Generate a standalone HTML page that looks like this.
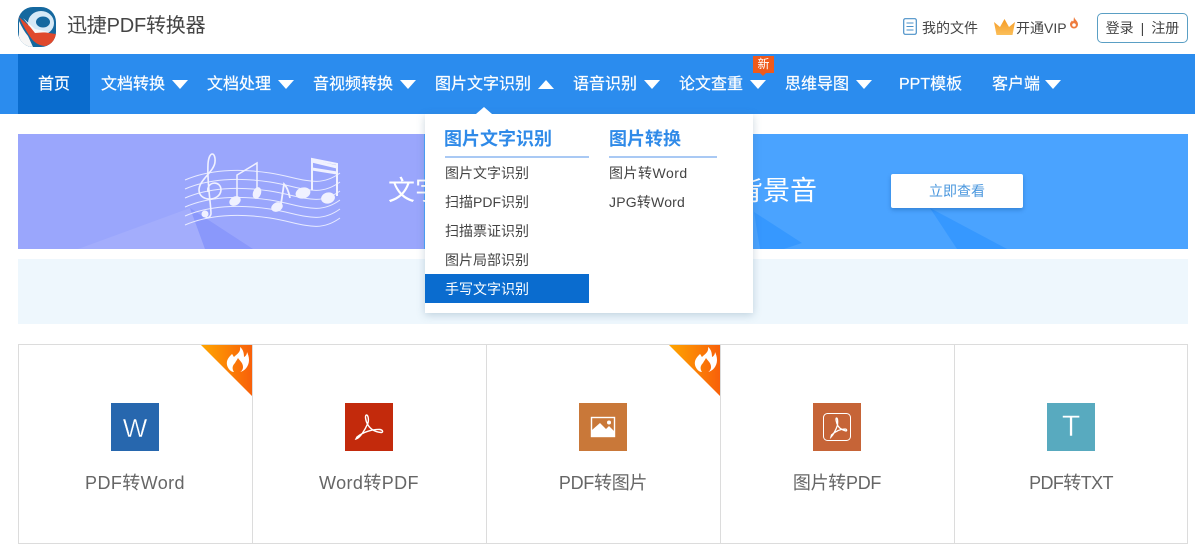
<!DOCTYPE html>
<html lang="zh"><head><meta charset="utf-8"><title>迅捷PDF转换器</title>
<style>
html,body{margin:0;padding:0;background:#fff}
body{width:1195px;height:545px;position:relative;overflow:hidden;font-family:"Liberation Sans","Noto Sans CJK SC",sans-serif;color:#444}
.a{position:absolute;white-space:nowrap}
.n{position:absolute;top:55px;height:60px;line-height:60px;color:#fff;font-size:16px;white-space:nowrap;-webkit-text-stroke:.2px #fff}
.t{position:absolute;top:80px;width:0;height:0;border-left:8px solid transparent;border-right:8px solid transparent;border-top:9px solid #fff}
.m{position:absolute;font-size:14px;color:#444;white-space:nowrap;line-height:20px}
.c{position:absolute;top:344px;height:198px;border:1px solid #dcdcdc;border-right:0;width:233px}
.i{position:absolute;top:403px;width:48px;height:48px}
.l{position:absolute;top:470px;width:234px;text-align:center;font-size:18px;line-height:26px;color:#666}
</style></head><body>
<svg class="a" style="left:18px;top:7px" width="38" height="40" viewBox="0 0 38 40">
<defs><clipPath id="lg"><rect x="0" y="0" width="38" height="40" rx="15"/></clipPath></defs>
<g clip-path="url(#lg)"><rect width="38" height="40" fill="#15689f"/>
<ellipse cx="23" cy="16" rx="13" ry="12" fill="#d6e9f6"/><ellipse cx="25" cy="15" rx="7" ry="5.500" fill="#15689f"/>
<path d="M11 27L6 40H22L26 32Z" fill="#15689f"/>
<path d="M1 10 L17 24 L38 27 L38 34 L28 39 Q19 39 13 31 Q6 21 1 10Z" fill="#e0492c"/>
<path d="M1 14 Q5 23 10 29 L15 40 L5 40 L1 30Z" fill="#f6f6f6"/>
<path d="M5 11 L17 22 L31 25 L17 26Z" fill="#f8f8f8"/></g></svg>
<div class="a" style="left:67px;top:12px;font-size:20px;line-height:28px;color:#444;letter-spacing:-.2px">迅捷PDF转换器</div>

<svg class="a" style="left:903px;top:18px" width="14" height="17" viewBox="0 0 14 17"><rect x=".7" y=".7" width="12.600" height="15.600" rx="1.500" fill="none" stroke="#4a90c8" stroke-width="1.200"/><path d="M3.500 5h7M3.500 8.500h7M3.500 12h7" stroke="#4a90c8" stroke-width="1.100"/></svg>
<div class="a" style="left:922px;top:19px;font-size:14px;line-height:18px;color:#444;letter-spacing:0">我的文件</div>
<svg class="a" style="left:994px;top:19px" width="22" height="17" viewBox="0 0 22 17"><defs><linearGradient id="cr" x1="0" y1="0" x2="0" y2="1"><stop offset="0" stop-color="#f59a23"/><stop offset="1" stop-color="#fbbf5a"/></linearGradient></defs><path d="M2.500 16 L0 3 L6 8 L10.500 0 L15 8 L21 3 L18.500 16Z" fill="url(#cr)"/></svg>
<div class="a" style="left:1016px;top:19px;font-size:14px;line-height:18px;color:#444">开通VIP</div>
<svg class="a" style="left:1069px;top:17px" width="10" height="12" viewBox="0 0 10 12"><path d="M5 0C6 3 9 4 9 7.500A4 4 0 0 1 1 7.500C1 5.500 2 5 3 3.500C3.500 4.500 4 4.500 4.500 4Z" fill="#ee7b3c"/><circle cx="5" cy="8" r="1.800" fill="#fff"/></svg>
<div class="a" style="left:1097px;top:13px;width:89px;height:28px;border:1px solid #5a9fc4;border-radius:5px;text-align:center;line-height:28px;font-size:14px;color:#444">登录<span style="margin:0 7px">|</span>注册</div>

<div class="a" style="left:0;top:54px;width:1195px;height:60px;background:#2b8cee"></div>
<div class="a" style="left:18px;top:54px;width:72px;height:60px;background:#0a6cce"></div>
<div class="n" style="left:38px">首页</div>
<div class="n" style="left:101px">文档转换</div><div class="t" style="left:172px"></div>
<div class="n" style="left:207px">文档处理</div><div class="t" style="left:278px"></div>
<div class="n" style="left:313px">音视频转换</div><div class="t" style="left:400px"></div>
<div class="n" style="left:435px">图片文字识别</div><div class="t" style="left:538px;border-top:0;border-bottom:9px solid #fff"></div>
<div class="n" style="left:573px">语音识别</div><div class="t" style="left:644px"></div>
<div class="n" style="left:679px">论文查重</div><div class="t" style="left:750px"></div>
<div class="n" style="left:785px">思维导图</div><div class="t" style="left:856px"></div>
<div class="n" style="left:899px">PPT模板</div>
<div class="n" style="left:992px">客户端</div><div class="t" style="left:1045px"></div>
<div class="a" style="left:753px;top:56px;width:21px;height:17px;background:#ef5a1c;color:#fff;font-size:12px;line-height:17px;text-align:center">新</div>
<div class="a" style="left:760px;top:73px;width:0;height:0;border-left:3px solid transparent;border-right:3px solid transparent;border-top:3px solid #ef5a1c"></div>

<div class="a" style="left:18px;top:134px;width:1170px;height:115px;background:#4aa3ff;overflow:hidden">
<div class="a" style="left:0;top:0;width:406px;height:115px;background:#9aa6fc"></div>
<svg class="a" style="left:0;top:0" width="1170" height="115" viewBox="0 0 1170 115">
<path d="M60 115L172 74L187 115Z" fill="#a3adfc"/>
<path d="M172 74L235 115H187Z" fill="#8a98fb"/>
<path d="M736 78L784 109L766 115H742Z" fill="#3698ff"/>
<path d="M912 74L989 115H939Z" fill="#3698ff"/>
<g fill="none" stroke="#e8ebff" stroke-width="1">
<path d="M167 46C190 36 220 34 252 39S300 55 322 39"/>
<path d="M167 55C190 45 220 43 252 48S300 64 322 48"/>
<path d="M167 64C190 54 220 52 252 57S300 73 322 57"/>
<path d="M167 73C190 63 220 61 252 66S300 82 322 66"/>
<path d="M167 82C190 72 220 70 252 75S300 91 322 75"/>
<path d="M167 91C190 81 220 79 252 84S300 100 322 84"/>
</g>
<g fill="#f0f1ff" stroke="#f0f1ff">
<path d="M188 80C186 85 192 85 193 80C193 70 189 50 190 30C191 16 198 18 197 28C196 38 181 46 181 56C181 68 202 68 203 56C203 46 188 47 190 58" fill="none" stroke-width="1.600"/>
<circle cx="187" cy="80" r="3.500" stroke="none"/>
<ellipse cx="217" cy="67" rx="6" ry="4.500" transform="rotate(-30 217 67)" stroke="none"/>
<ellipse cx="239" cy="59" rx="4" ry="6" transform="rotate(20 239 59)" stroke="none"/>
<path d="M219 64V41L239 29V56" fill="none" stroke-width="1.500"/>
<ellipse cx="259" cy="73" rx="6" ry="4.500" transform="rotate(-25 259 73)" stroke="none"/>
<path d="M263 70L266 50Q270 54 272 64" fill="none" stroke-width="1.800"/>
<ellipse cx="285" cy="59" rx="7.500" ry="5.500" transform="rotate(-15 285 59)" stroke="none"/>
<ellipse cx="310" cy="64" rx="7" ry="5.500" transform="rotate(-15 310 64)" stroke="none"/>
<path d="M294 56V25L319 30V62" fill="none" stroke-width="2"/>
<path d="M294 27L319 33M294 35L319 39" fill="none" stroke-width="3"/>
</g></svg>
<div class="a" style="left:370px;top:40px;font-size:27px;line-height:34px;color:#fff">文字</div>
<div class="a" style="left:718px;top:40px;font-size:27px;line-height:34px;color:#fff">背景音</div>
<div class="a" style="left:873px;top:40px;width:132px;height:34px;background:#fff;border-radius:2px;box-shadow:0 2px 4px rgba(0,60,120,.3);text-align:center;line-height:34px;font-size:14px;color:#4a97de">立即查看</div>
</div>
<div class="a" style="left:18px;top:259px;width:1170px;height:65px;background:#eef7fd"></div>

<div class="a" style="left:425px;top:114px;width:328px;height:199px;background:#fff;box-shadow:0 2px 8px rgba(70,110,140,.28)"></div>
<div class="a" style="left:476px;top:107px;width:0;height:0;border-left:8px solid transparent;border-right:8px solid transparent;border-bottom:7px solid #fff"></div>
<div class="a" style="left:444px;top:126px;font-size:18px;line-height:26px;font-weight:bold;color:#2f8ae8">图片文字识别</div>
<div class="a" style="left:445px;top:156px;width:144px;height:2px;background:#a9c9f4"></div>
<div class="a" style="left:609px;top:126px;font-size:18px;line-height:26px;font-weight:bold;color:#2f8ae8">图片转换</div>
<div class="a" style="left:609px;top:156px;width:108px;height:2px;background:#a9c9f4"></div>
<div class="m" style="left:445px;top:163px">图片文字识别</div>
<div class="m" style="left:445px;top:192px">扫描PDF识别</div>
<div class="m" style="left:445px;top:221px">扫描票证识别</div>
<div class="m" style="left:445px;top:250px">图片局部识别</div>
<div class="a" style="left:425px;top:274px;width:164px;height:29px;background:#0a6ccf"></div>
<div class="m" style="left:445px;top:279px;color:#fff">手写文字识别</div>
<div class="m" style="left:609px;top:163px;letter-spacing:.5px">图片转Word</div>
<div class="m" style="left:609px;top:192px;letter-spacing:.2px">JPG转Word</div>

<div class="c" style="left:18px"></div><div class="c" style="left:252px"></div><div class="c" style="left:486px"></div><div class="c" style="left:720px"></div><div class="c" style="left:954px;width:232px;border-right:1px solid #dcdcdc"></div>

<svg class="a" style="left:201px;top:345px" width="51" height="51" viewBox="0 0 51 51"><defs><linearGradient id="g" x1="0" y1="0" x2="1" y2="0"><stop offset="0" stop-color="#ffa600"/><stop offset="1" stop-color="#f8600a"/></linearGradient></defs><path d="M0 0H51V51Z" fill="url(#g)"/><path d="M39 2C40 7 36 9 33 12C32 11 32 10 31 9C28 12 25 15 26 20C27 24 30 27 33 27C31 24 31 21 34 18C35 16 36 15 37 13C39 16 42 18 42 22C42 24 41 26 39 27C44 26 48 21 48 15C48 12 47 9 46 7C46 9 45 11 43 12C43 8 42 4 39 2Z" fill="#fff"/></svg>
<svg class="a" style="left:669px;top:345px" width="51" height="51" viewBox="0 0 51 51"><defs><linearGradient id="g2" x1="0" y1="0" x2="1" y2="0"><stop offset="0" stop-color="#ffa600"/><stop offset="1" stop-color="#f8600a"/></linearGradient></defs><path d="M0 0H51V51Z" fill="url(#g2)"/><path d="M39 2C40 7 36 9 33 12C32 11 32 10 31 9C28 12 25 15 26 20C27 24 30 27 33 27C31 24 31 21 34 18C35 16 36 15 37 13C39 16 42 18 42 22C42 24 41 26 39 27C44 26 48 21 48 15C48 12 47 9 46 7C46 9 45 11 43 12C43 8 42 4 39 2Z" fill="#fff"/></svg>

<div class="i" style="left:111px;background:#2767ae;color:#fff;font-size:26px;line-height:50px;text-align:center;-webkit-text-stroke:.4px #2767ae">W</div>
<svg class="i" style="left:345px" viewBox="0 0 48 48"><rect width="48" height="48" fill="#c32a0c"/><path d="M11 36C15 35 20 27 23 20C24 16 23 12 21.500 12C20 12 20 17 23 22C26 27 31 29 36 29.500C38.500 29.500 38 27 35 26.500C28 26 18 29 12 34Z" fill="none" stroke="#fff" stroke-width="1.400"/></svg>
<svg class="i" style="left:579px" viewBox="0 0 48 48"><rect width="48" height="48" fill="#c97839"/><rect x="12.500" y="14.500" width="23" height="19" fill="none" stroke="#fff" stroke-width="1.400"/><path d="M13 33V27L21 20L27 26L30 23L35 28V33Z" fill="#fff"/><circle cx="30" cy="19.500" r="2" fill="#fff"/></svg>
<svg class="i" style="left:813px" viewBox="0 0 48 48"><rect width="48" height="48" fill="#c66437"/><rect x="10.500" y="10.500" width="27" height="27" rx="4" fill="none" stroke="#fff" stroke-width="1"/><path d="M18 34C20 32 23 27 24.500 22C25 18 24.500 15 23.500 15C22.500 15 23 19 25 23C27 26 30 27 33 28C34 28 34 26 32 26C28 26 23 28 18.500 32Z" fill="none" stroke="#fff" stroke-width="1.300"/></svg>
<div class="i" style="left:1047px;background:#58aabf;color:#fff;font-size:30px;line-height:48px;text-align:center;-webkit-text-stroke:.4px #58aabf">T</div>

<div class="l" style="left:18px;letter-spacing:.4px">PDF转Word</div>
<div class="l" style="left:252px;letter-spacing:.4px">Word转PDF</div>
<div class="l" style="left:486px;letter-spacing:-.3px">PDF转图片</div>
<div class="l" style="left:720px;letter-spacing:-.3px">图片转PDF</div>
<div class="l" style="left:954px;letter-spacing:-.6px">PDF转TXT</div>
</body></html>
